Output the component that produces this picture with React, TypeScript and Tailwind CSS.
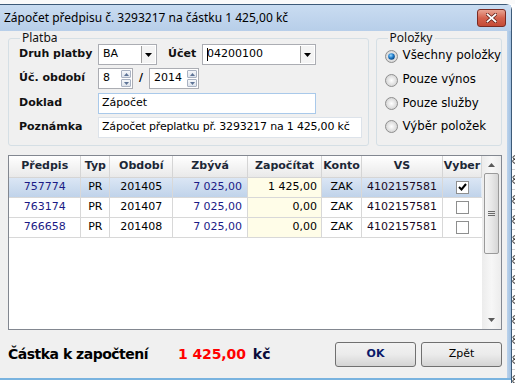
import * as React from "react"

const rows = [
  { predpis: "757774", typ: "PR", obdobi: "201405", zbyva: "7 025,00", zapocitat: "1 425,00", konto: "ZAK", vs: "4102157581", checked: true },
  { predpis: "763174", typ: "PR", obdobi: "201407", zbyva: "7 025,00", zapocitat: "0,00", konto: "ZAK", vs: "4102157581", checked: false },
  { predpis: "766658", typ: "PR", obdobi: "201408", zbyva: "7 025,00", zapocitat: "0,00", konto: "ZAK", vs: "4102157581", checked: false },
]

const cols = [
  { title: "Předpis", w: "w-[72px]" },
  { title: "Typ", w: "w-[29px]" },
  { title: "Období", w: "w-[63px]" },
  { title: "Zbývá", w: "w-[75px]" },
  { title: "Započítat", w: "w-[74px]" },
  { title: "Konto", w: "w-[40px]" },
  { title: "VS", w: "w-[81px]" },
  { title: "Vyber", w: "w-[39px]" },
]

function DropArrow() {
  return (
    <svg width="7" height="4" viewBox="0 0 7 4">
      <path d="M0 0h7L3.5 4z" fill="#000" />
    </svg>
  )
}

function Select({ value, width, caret }: { value: string; width: string; caret?: boolean }) {
  return (
    <div className={`${width} flex h-[21px] border border-[#abadb3] bg-white`}>
      <div className="flex flex-1 items-center pl-[4px]">
        {caret && <span className="mr-[-1px] h-[13px] w-px bg-black" />}
        {value}
      </div>
      <div className="my-[1px] mr-[1px] flex w-[14px] items-center justify-center border-l border-[#a0a0a0] bg-[#f4f4f4]">
        <DropArrow />
      </div>
    </div>
  )
}

function SpinBtn({ up }: { up?: boolean }) {
  return (
    <div className="flex h-[8px] w-[10px] items-center justify-center rounded-[1px] border border-[#a9b2c2] bg-gradient-to-b from-[#f6f8fb] to-[#dde3ec]">
      <svg width="5" height="3" viewBox="0 0 5 3">
        <path d={up ? "M0 3h5L2.5 0z" : "M0 0h5L2.5 3z"} fill="#5d7396" />
      </svg>
    </div>
  )
}

function Spinner({ value, width }: { value: string; width: string }) {
  return (
    <div className={`${width} flex h-[21px] items-center border border-[#abadb3] bg-white pl-[4px] pr-[1px]`}>
      <span className="flex-1">{value}</span>
      <div className="flex flex-col gap-px">
        <SpinBtn up />
        <SpinBtn />
      </div>
    </div>
  )
}

function Radio({ checked }: { checked?: boolean }) {
  return (
    <svg width="13" height="13" viewBox="0 0 13 13">
      <defs>
        <radialGradient id="rb" cx="0.5" cy="0.5" r="0.5">
          <stop offset="0" stopColor="#ffffff" />
          <stop offset="1" stopColor="#d4d4d4" />
        </radialGradient>
        <radialGradient id="dot" cx="0.4" cy="0.35" r="0.6">
          <stop offset="0" stopColor="#9fdcff" />
          <stop offset="0.6" stopColor="#1f7ccb" />
          <stop offset="1" stopColor="#0e4f8c" />
        </radialGradient>
      </defs>
      <circle cx="6.5" cy="6.5" r="6" fill="url(#rb)" stroke="#8f8f8f" />
      {checked && <circle cx="6.5" cy="6.5" r="3.3" fill="url(#dot)" />}
    </svg>
  )
}

function Checkbox({ checked }: { checked?: boolean }) {
  return (
    <div className="flex h-[13px] w-[13px] items-center justify-center border border-[#8e8f8f] bg-white">
      {checked && (
        <svg width="9" height="8" viewBox="0 0 9 8">
          <path d="M1 4l2.5 2.5L8 1" fill="none" stroke="#000" strokeWidth="2" />
        </svg>
      )}
    </div>
  )
}

// clipped column of the application window lying behind the dialog
function BehindEdge() {
  return (
    <div className="flex w-[3px] flex-col overflow-hidden pt-[146px]">
      {Array.from({ length: 12 }).map((_, i) => (
        <div key={i} className="flex h-[20px] items-center border-b border-[#d0d0d0]">
          <svg width="3" height="9" viewBox="0 0 3 9">
            <path d="M3 0.8C1.5 0.8 1 1.6 1 2.4S1.6 4 3 4.2M3 4.2C1.4 4.4 0.8 5.3 0.8 6.3S1.5 8.2 3 8.2" fill="none" stroke="#222" strokeWidth="1" />
          </svg>
        </div>
      ))}
    </div>
  )
}

export default function App() {
  const labelCls = "font-bold text-[#111]"

  return (
    <div className="flex h-[383px] w-[515px] flex-col overflow-hidden bg-white font-['DejaVu_Sans',sans-serif] text-[11px] text-black">
      <div className="h-[4px] shrink-0 bg-[#fafafa]" />

      <div className="flex">
        <div className="flex w-[512px] flex-col rounded-tr-[6px] border-r border-t border-[#3d5a78]">
          {/* Title bar */}
          <div className="flex h-[26px] items-center bg-gradient-to-b from-[#c9dcf1] to-[#b7cee9] pl-[4px] pr-[5px] font-['Noto_Sans',sans-serif] text-[12px] text-black">
            <span className="flex-1">Zápočet předpisu č. 3293217 na částku 1 425,00 kč</span>
            <div className="flex h-[18px] w-[29px] items-center justify-center rounded-[3px] border border-[#7a2a22] bg-gradient-to-b from-[#e8a493] via-[#d4624d] to-[#c44a36]">
              <svg width="11" height="10" viewBox="0 0 11 10">
                <path d="M1.5 1.5l8 7M9.5 1.5l-8 7" stroke="#5a1a12" strokeWidth="3.2" strokeLinecap="square" />
                <path d="M1.5 1.5l8 7M9.5 1.5l-8 7" stroke="#fff" strokeWidth="1.8" strokeLinecap="square" />
              </svg>
            </div>
          </div>

          <div className="flex">
            {/* Client */}
            <div className="flex h-[347px] w-[507px] flex-col bg-[#f0f0f0] pl-[8px] pr-[5px]">
              <div className="flex gap-[7px]">
                <fieldset className="h-[115px] w-[362px] rounded-[3px] border border-[#d5dfe5] pl-[10px]">
                  <legend className="ml-[1px] px-[2px] font-['Noto_Sans',sans-serif] text-[12px] leading-[14px] text-[#111]">
                    Platba
                  </legend>
                  <div className="mt-[-1px] flex h-[21px] items-center">
                    <span className={`w-[79px] ${labelCls}`}>Druh platby</span>
                    <Select value="BA" width="w-[59px]" />
                    <span className={`ml-[11px] w-[34px] ${labelCls}`}>Účet</span>
                    <Select value="04200100" width="w-[114px]" caret />
                  </div>
                  <div className="mt-[3px] flex h-[21px] items-center">
                    <span className={`w-[79px] ${labelCls}`}>Úč. období</span>
                    <Spinner value="8" width="w-[35px]" />
                    <span className="w-[16px] text-center font-bold">/</span>
                    <Spinner value="2014" width="w-[50px]" />
                  </div>
                  <div className="mt-[4px] flex h-[21px] items-center">
                    <span className={`w-[79px] ${labelCls}`}>Doklad</span>
                    <div className="flex h-[21px] w-[218px] items-center border border-[#a9c9ea] bg-white pl-[3px]">
                      Zápočet
                    </div>
                  </div>
                  <div className="mt-[3px] flex h-[21px] items-center">
                    <span className={`w-[79px] ${labelCls}`}>Poznámka</span>
                    <div className="flex h-[21px] w-[264px] items-center overflow-hidden whitespace-nowrap border border-[#dde3ea] bg-white pl-[3px] tracking-[-0.2px]">
                      Zápočet přeplatku př. 3293217 na 1 425,00 kč
                    </div>
                  </div>
                </fieldset>

                <fieldset className="h-[115px] w-[125px] rounded-[3px] border border-[#d5dfe5] pl-[8px]">
                  <legend className="ml-[3px] px-[2px] font-['Noto_Sans',sans-serif] text-[12px] leading-[14px] text-[#111]">
                    Položky
                  </legend>
                  <div className="mt-[-1px] flex flex-col">
                    {[
                      { t: "Všechny položky", h: "h-[24px]", c: true },
                      { t: "Pouze výnos", h: "h-[24px]" },
                      { t: "Pouze služby", h: "h-[23px]" },
                      { t: "Výběr položek", h: "h-[23px]" },
                    ].map((r) => (
                      <div key={r.t} className={`flex items-center gap-[5px] text-[11.8px] ${r.h}`}>
                        <Radio checked={r.c} />
                        <span className="whitespace-nowrap">{r.t}</span>
                      </div>
                    ))}
                  </div>
                </fieldset>
              </div>

              {/* Grid */}
              <div className="mt-[9px] flex h-[175px] w-[494px] border border-[#828790] bg-white">
                <div className="w-[473px]">
                  <table className="table-fixed border-collapse">
                    <thead>
                      <tr className="h-[21px] bg-gradient-to-b from-[#ffffff] to-[#e9e9e9]">
                        {cols.map((c) => (
                          <th
                            key={c.title}
                            className={`${c.w} border-b border-r border-[#d5d5d5] p-0 text-center font-bold text-[#1c2736]`}
                          >
                            {c.title}
                          </th>
                        ))}
                      </tr>
                    </thead>
                    <tbody>
                      {rows.map((r) => {
                        const sel = r.checked
                        const bg = sel ? "bg-gradient-to-b from-[#dce7f5] to-[#c0d3ea]" : "bg-white"
                        const cell = "h-[20px] border-b border-r border-[#d8d8d8] p-0 whitespace-nowrap"
                        return (
                          <tr key={r.predpis} className={bg}>
                            <td className={`${cell} text-center text-[#1b1b86]`}>{r.predpis}</td>
                            <td className={`${cell} text-center`}>{r.typ}</td>
                            <td className={`${cell} text-center`}>{r.obdobi}</td>
                            <td className={`${cell} pr-[5px] text-right text-[#1b1b86]`}>{r.zbyva}</td>
                            <td className={`${cell} bg-[#fffde8] pr-[4px] text-right`}>{r.zapocitat}</td>
                            <td className={`${cell} text-center`}>{r.konto}</td>
                            <td className={`${cell} text-center text-[#1a0a24]`}>{r.vs}</td>
                            <td className={`${cell} border-r-0`}>
                              <div className="flex justify-center">
                                <Checkbox checked={r.checked} />
                              </div>
                            </td>
                          </tr>
                        )
                      })}
                    </tbody>
                  </table>
                </div>

                {/* Scrollbar */}
                <div className="flex w-[19px] flex-col items-center bg-gradient-to-r from-[#ececec] via-[#f7f7f7] to-[#ececec] pb-[1px]">
                  <div className="flex h-[17px] w-full items-center justify-center">
                    <svg width="7" height="4" viewBox="0 0 7 4">
                      <path d="M0 4h7L3.5 0z" fill="#5a5a5a" />
                    </svg>
                  </div>
                  <div className="flex h-[81px] w-[15px] items-center justify-center rounded-[2px] border border-[#9a9a9a] bg-gradient-to-r from-[#f4f4f4] via-[#e8e8e8] to-[#d6d6d6]">
                    <svg width="7" height="7" viewBox="0 0 7 7">
                      <path d="M0 1.5h7M0 3.5h7M0 5.5h7" stroke="#6b6b6b" strokeWidth="1" />
                    </svg>
                  </div>
                  <div className="flex-1" />
                  <div className="flex h-[17px] w-full items-center justify-center">
                    <svg width="7" height="4" viewBox="0 0 7 4">
                      <path d="M0 0h7L3.5 4z" fill="#5a5a5a" />
                    </svg>
                  </div>
                </div>
              </div>

              {/* Footer */}
              <div className="flex h-[48px] items-center">
                <span className="w-[170px] text-[14px] font-bold tracking-[-0.5px] text-black">Částka k započtení</span>
                <span className="text-[14px] font-bold tracking-[-0.1px] text-[#ff0000]">1 425,00</span>
                <span className="ml-[7px] text-[14px] font-bold text-[#0b0b3a]">kč</span>
                <div className="ml-auto flex gap-[5px]">
                  <button className="h-[25px] w-[81px] rounded-[3px] border border-[#707070] bg-gradient-to-b from-[#f2f2f2] via-[#ebebeb] to-[#d4d4d4] font-bold text-[#0a1a6a]">
                    OK
                  </button>
                  <button className="h-[25px] w-[81px] rounded-[3px] border border-[#707070] bg-gradient-to-b from-[#f2f2f2] via-[#ebebeb] to-[#d4d4d4] text-black">
                    Zpět
                  </button>
                </div>
              </div>
            </div>
            {/* Right frame */}
            <div className="w-[4px] bg-gradient-to-r from-[#bcd3ec] to-[#9fbfe0]" />
          </div>
          <div className="h-[2px] bg-[#79b3df]" />
        </div>
        <BehindEdge />
      </div>
      <div className="h-px bg-[#3d5a78]" />
    </div>
  )
}
